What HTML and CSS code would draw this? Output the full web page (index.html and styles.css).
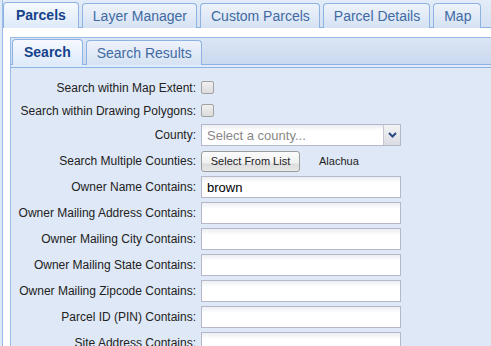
FILE: index.html
```html
<!DOCTYPE html>
<html lang="en">
    <head>
        <meta charset="utf-8">
        <title>Parcels</title>
        <link rel="stylesheet" href="styles.css">
    </head>
    <body>
        <div class="app">
            <div class="strip outer-strip">
                <span class="tab active">Parcels</span>
                <span class="tab">Layer Manager</span>
                <span class="tab">Custom Parcels</span>
                <span class="tab">Parcel Details</span>
                <span class="tab">Map</span>
            </div>
            <div class="outer-body">
                <div class="inner">
                    <div class="strip inner-strip">
                        <span class="tab active">Search</span>
                        <span class="tab">Search Results</span>
                    </div>
                    <div class="spacer"></div>
                    <div class="search-form">
                        <div class="row short">
                            <label>Search within Map Extent:</label>
                            <span class="check"></span>
                        </div>
                        <div class="row short">
                            <label>Search within Drawing Polygons:</label>
                            <span class="check"></span>
                        </div>
                        <div class="row">
                            <label>County:</label>
                            <div class="combo">
                                <span class="placeholder">Select a county...</span>
                                <span class="trigger">
                                    <svg width="9" height="6" viewBox="0 0 9 6"><path d="M1 1 L4.5 4.5 L8 1" fill="none" stroke="#2a4a86" stroke-width="2"/></svg>
                                </span>
                            </div>
                        </div>
                        <div class="row">
                            <label>Search Multiple Counties:</label>
                            <button type="button" class="btn">Select From List</button>
                            <span class="picked">Alachua</span>
                        </div>
                        <div class="row">
                            <label>Owner Name Contains:</label>
                            <input type="text" class="field" value="brown">
                        </div>
                        <div class="row">
                            <label>Owner Mailing Address Contains:</label>
                            <input type="text" class="field">
                        </div>
                        <div class="row">
                            <label>Owner Mailing City Contains:</label>
                            <input type="text" class="field">
                        </div>
                        <div class="row">
                            <label>Owner Mailing State Contains:</label>
                            <input type="text" class="field">
                        </div>
                        <div class="row">
                            <label>Owner Mailing Zipcode Contains:</label>
                            <input type="text" class="field">
                        </div>
                        <div class="row">
                            <label>Parcel ID (PIN) Contains:</label>
                            <input type="text" class="field">
                        </div>
                        <div class="row">
                            <label>Site Address Contains:</label>
                            <input type="text" class="field">
                        </div>
                    </div>
                </div>
            </div>
        </div>
    </body>
</html>
```

FILE: styles.css
```css
body {
    margin: 0;
    font-family: "Liberation Sans", Arial, sans-serif;
    background: #dfe8f6;
    overflow: hidden;
}
.app {
    margin-left: 2px;
    border-left: 1px solid #99bbe8;
    height: 346px;
    background: #fff;
}
.strip {
    display: flex;
    gap: 3px;
    align-items: flex-end;
    border-bottom: 1px solid #8db2e3;
}
.outer-strip {
    height: 27px;
    background: linear-gradient(#e3ecf8, #d4e1f2);
}
.tab {
    flex-shrink: 0;
    white-space: nowrap;
    height: 24px;
    line-height: 25px;
    padding: 0 9px 0 10px;
    font-size: 14px;
    color: #416aa3;
    border: 1px solid #8db2e3;
    border-bottom: none;
    border-radius: 4px 4px 0 0;
    background: linear-gradient(#eef3fb, #d5e2f3);
    margin-bottom: -1px;
}
.tab.active {
    height: 25px;
    font-weight: bold;
    color: #15428b;
    padding: 0 12px;
    background: linear-gradient(#f6f9fe, #deeafa);
}
.inner-strip .tab.active {
    padding: 0 11px;
}
.outer-body {
    padding: 9px 0 0 7px;
}
.inner {
    border-left: 1px solid #99bbe8;
    border-top: 1px solid #99bbe8;
    background: #dfe8f6;
    height: 320px;
}
.inner-strip {
    height: 26px;
    padding-left: 1px;
    background: linear-gradient(#dbe6f5, #cad9ef);
}
.spacer {
    height: 2px;
    background: #deecfd;
    border-bottom: 1px solid #8db2e3;
}
.search-form {
    display: flex;
    flex-direction: column;
    gap: 4px;
    padding-top: 10px;
}
.row {
    display: flex;
    align-items: center;
    gap: 5px;
    height: 22px;
    font-size: 12px;
    color: #222;
}
.row.short {
    height: 19px;
}
.row label {
    width: 185px;
    text-align: right;
}
.check {
    width: 11px;
    height: 11px;
    border: 1px solid #a2a2a2;
    border-radius: 2px;
    background: linear-gradient(#f0f0f0, #dcdcdc);
}
.field, .combo {
    box-sizing: border-box;
    width: 200px;
    height: 22px;
    margin: 0;
    padding: 1px 5px 0;
    border: 1px solid #b5b8c8;
    background: linear-gradient(#eceef2, #fff 6px);
    font-family: inherit;
    font-size: 13px;
    color: #000;
    outline: none;
}
.combo {
    display: flex;
    align-items: center;
    padding: 0 0 0 5px;
}
.placeholder {
    flex: 1;
    color: #888;
}
.trigger {
    width: 16px;
    height: 20px;
    display: flex;
    align-items: center;
    justify-content: center;
    border-left: 1px solid #c4c7d2;
    background: linear-gradient(#f4f4f4, #d9dce3);
}
.btn {
    height: 21px;
    width: 99px;
    margin-left: 0;
    padding: 0;
    border: 1px solid #9c9c9c;
    border-radius: 3px;
    background: linear-gradient(#fbfbfb, #f0f0f0 60%, #dcdcdc 61%, #e8e8e8);
    font-family: inherit;
    font-size: 11px;
    color: #222;
}
.picked {
    margin-left: 14px;
    font-size: 11px;
}
```
